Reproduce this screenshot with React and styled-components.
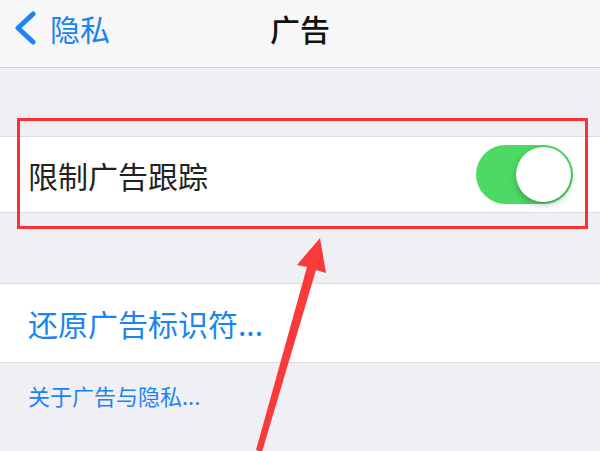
import React from "react";
import styled, { createGlobalStyle } from "styled-components";

const GlobalStyle = createGlobalStyle`
  html, body {
    margin: 0;
    padding: 0;
    background: #efeff4;
  }
  body {
    font-family: "Noto Sans CJK SC", "Noto Sans", sans-serif;
  }
`;

const Page = styled.div`
  position: relative;
  width: 600px;
  height: 451px;
  overflow: hidden;
  background: #efeff4;
`;

const NavBar = styled.div`
  display: grid;
  grid-template-columns: 1fr auto 1fr;
  align-items: center;
  height: 68px;
  padding-bottom: 12px;
  box-sizing: border-box;
  background: #f7f7f8;
  border-bottom: 1px solid #cfcfd4;
`;

const BackButton = styled.div`
  display: flex;
  align-items: center;
  gap: 13px;
  padding-left: 13px;
  color: #1a84f3;
  font-size: 30px;
  line-height: 1;
`;

const Title = styled.div`
  font-size: 30px;
  font-weight: 500;
  color: #111;
  line-height: 1;
`;

const Group = styled.div`
  position: relative;
  margin-top: ${({ $gap }) => $gap}px;
  background: #fff;
  border-top: 1px solid #dcdce0;
  border-bottom: 1px solid #dcdce0;
`;

const Cell = styled.div`
  display: flex;
  align-items: center;
  justify-content: space-between;
  height: ${({ $h }) => $h || 75}px;
  padding: 0 28px;
  font-size: 30px;
  line-height: 1;
  color: ${({ $link }) => ($link ? "#1a84f3" : "#222")};
`;

const Switch = styled.div`
  position: relative;
  width: 97px;
  height: 59px;
  margin-right: -1px;
  border-radius: 30px;
  background: #4cd964;
`;

const Knob = styled.div`
  position: absolute;
  top: 2px;
  right: 2px;
  width: 55px;
  height: 55px;
  border-radius: 50%;
  background: #fff;
  box-shadow: 0 3px 6px rgba(0, 0, 0, 0.25), 0 0 1px rgba(0, 0, 0, 0.2);
`;

const Footer = styled.div`
  padding: 21px 28px 0;
  font-size: 22px;
  line-height: 1;
  color: #1a84f3;
`;

const Highlight = styled.div`
  position: absolute;
  left: 17px;
  right: 12px;
  top: -19px;
  bottom: -17px;
  border: 3px solid #fb3036;
  pointer-events: none;
`;

const Arrow = styled.svg`
  position: absolute;
  left: 0;
  top: 0;
  pointer-events: none;
`;

const App = () => {
  return (
    <>
      <GlobalStyle />
      <Page>
        <NavBar>
          <BackButton>
            <svg width="24" height="34" viewBox="0 0 24 34">
              <path
                d="M20 3 L5 17 L20 31"
                fill="none"
                stroke="#1a84f3"
                strokeWidth="5"
                strokeLinecap="round"
                strokeLinejoin="round"
              />
            </svg>
            隐私
          </BackButton>
          <Title>广告</Title>
          <div />
        </NavBar>

        <Group $gap={68}>
          <Cell>
            限制广告跟踪
            <Switch>
              <Knob />
            </Switch>
          </Cell>
          <Highlight />
        </Group>

        <Group $gap={70}>
          <Cell $link $h={78}>还原广告标识符...</Cell>
        </Group>

        <Footer>关于广告与隐私...</Footer>

        <Arrow width="600" height="451" viewBox="0 0 600 451">
          <polygon
            points="320,238 326,273 316,270 262,452 256,450 307,267 297,265"
            fill="#f83a3a"
          />
        </Arrow>
      </Page>
    </>
  );
};

export default App;
